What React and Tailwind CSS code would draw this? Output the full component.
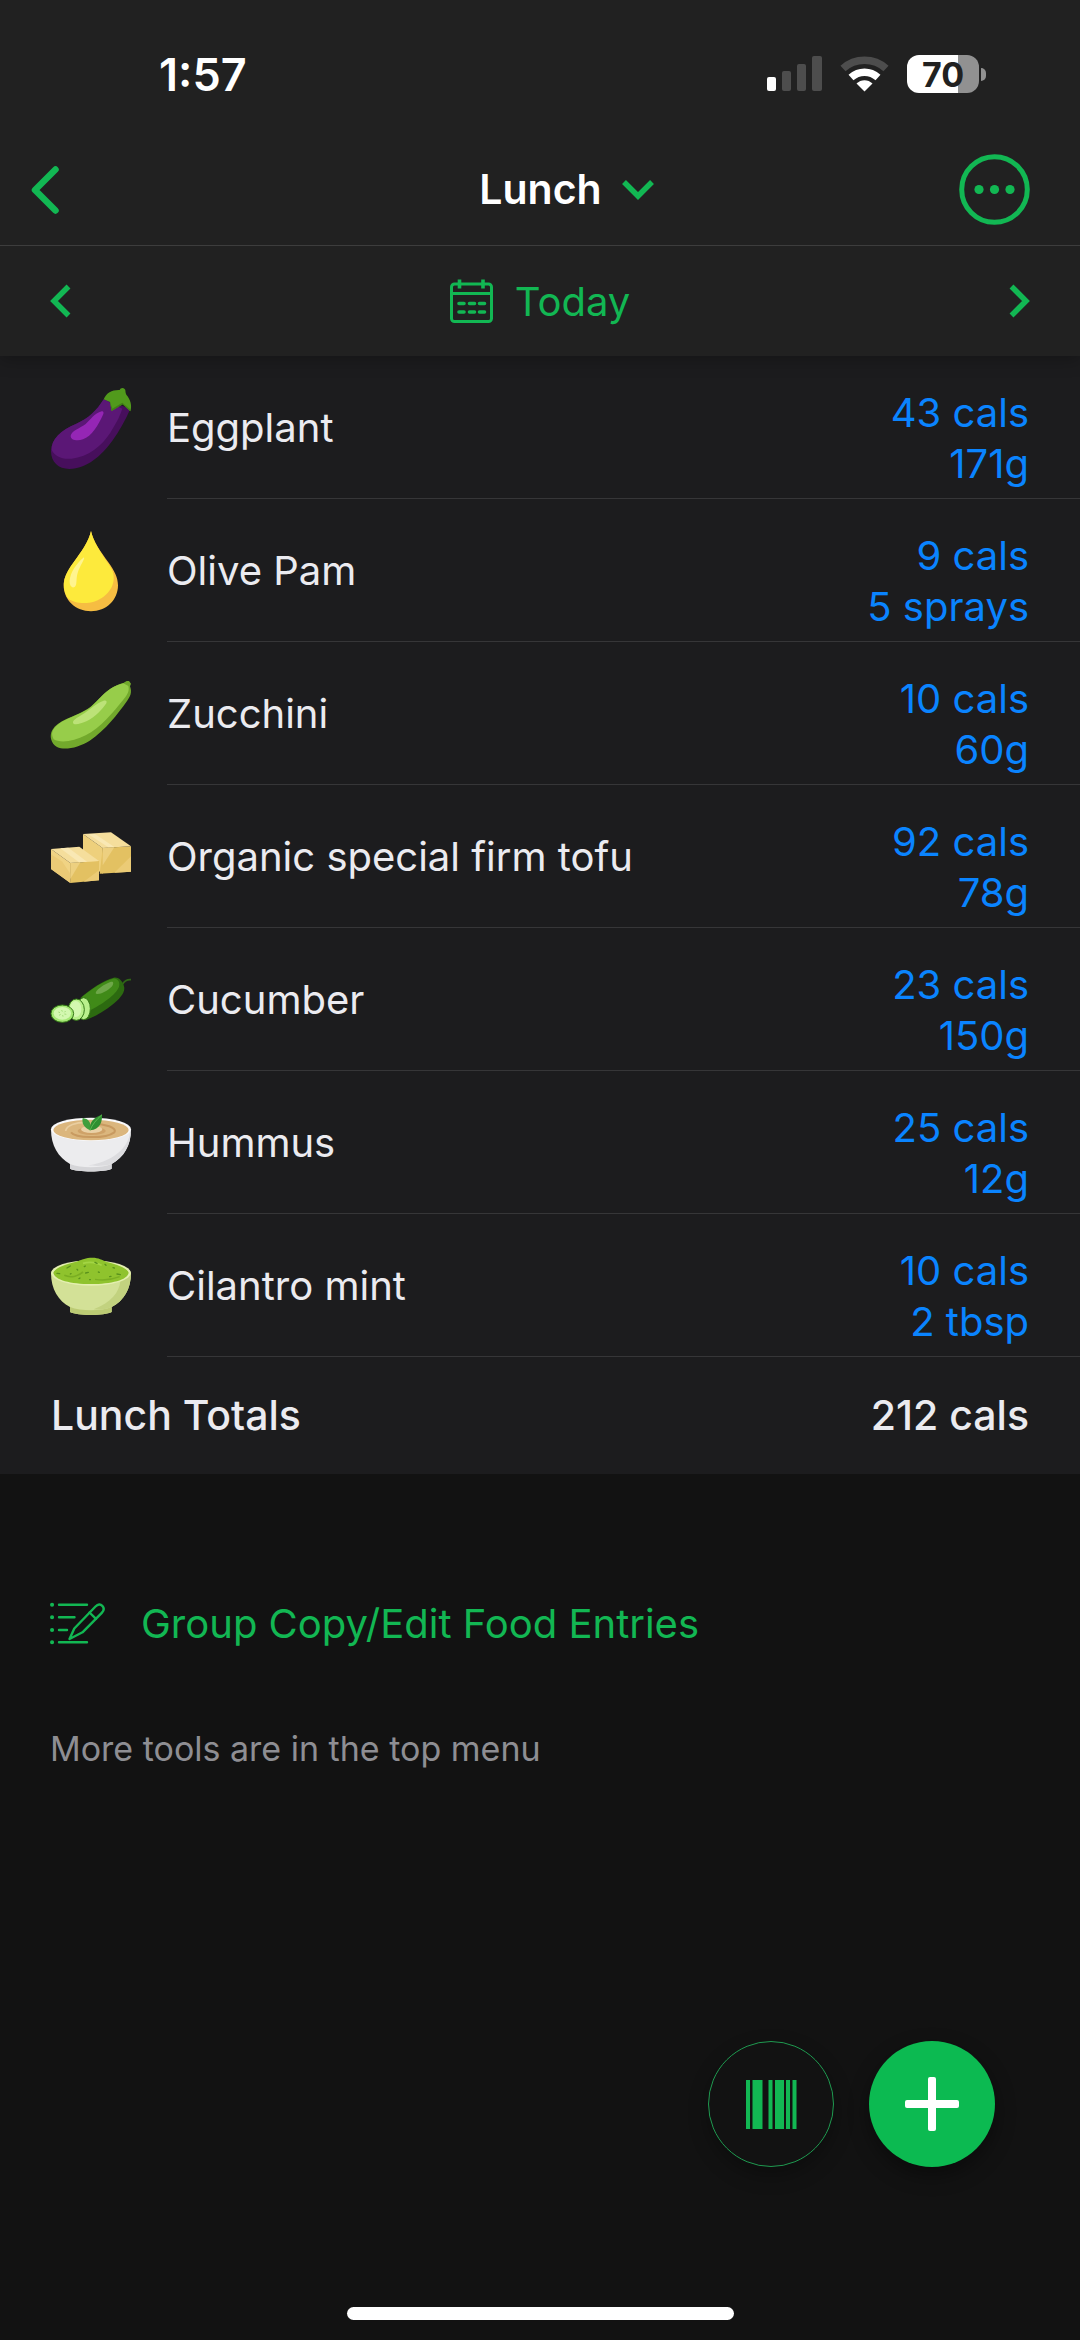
import React, { useState } from "react";

// Food drawings
const Eggplant = () => (
  <svg viewBox="0 0 240 240" className="w-20 h-20 overflow-visible" aria-hidden="true">
    <path
      d="M158 34C137 68 112 92 76 107C30 126 0 154 0 190C0 222 22 243 55 243C108 243 152 202 183 160C204 130 224 96 238 62Z"
      fill="#470f5c"
    />
    <path
      d="M158 34C137 68 112 92 76 107C30 126 0 154 2 186C12 206 34 215 62 212C112 206 152 174 178 134C192 110 204 92 214 62Z"
      fill="#5b1776"
    />
    <path
      d="M152 70C130 76 118 96 104 108C88 120 62 128 59 143C58 156 78 160 96 154C122 145 142 112 157 78C159 71 156 69 152 70Z"
      fill="#9526b5"
    />
    <path
      d="M158 34C166 14 184 5 206 6C208 0 216 -2 221 3C225 7 222 13 226 20C238 34 244 52 238 70L215 49L182 69L177 42Z"
      fill="#519a1c"
    />
    <path d="M177 42L182 69L215 49L238 70L237 64L214 44L184 62Z" fill="#3f7f14" />
  </svg>
);

const OilDrop = () => (
  <svg viewBox="0 0 240 240" className="w-20 h-20 overflow-visible" aria-hidden="true">
    <path
      d="M120 0C126 30 150 64 172 94C190 119 201 140 201 163C201 207 166 241 120 241C74 241 38 207 38 163C38 140 50 119 68 94C90 64 114 30 120 0Z"
      fill="#f6bd42"
    />
    <path
      d="M120 0C126 30 148 62 166 90C182 112 190 124 188 146C184 188 140 219 92 216C74 215 58 210 48 199C28 160 42 128 68 94C90 64 114 30 120 0Z"
      fill="#fdea3c"
    />
    <path
      d="M97 80C76 98 58 124 56 148C55 162 61 171 69 169C77 166 76 154 77 142C79 118 92 100 99 84C100 80 99 78 97 80Z"
      fill="#fff48f"
    />
  </svg>
);

const Zucchini = () => (
  <svg viewBox="0 0 240 240" className="w-20 h-20 overflow-visible" aria-hidden="true">
    <path
      d="M217 27L227 21L234 21L240 29L237 37C244 56 238 68 226 84C200 120 164 168 116 200C84 220 42 230 18 219C0 208 -6 186 4 168C22 138 64 132 108 106C142 86 160 42 217 27Z"
      fill="#72a92c"
    />
    <path
      d="M217 28L232 36C236 50 230 60 218 76C186 116 148 162 104 184C70 202 28 208 8 196C-2 178 4 166 22 151C50 130 78 126 110 106C142 86 160 42 217 28Z"
      fill="#97cd4a"
    />
    <path
      d="M156 81C136 88 120 104 100 118C84 129 66 136 66 146C68 155 88 150 108 141C134 128 154 106 166 88C169 80 164 78 156 81Z"
      fill="#bce278"
    />
  </svg>
);

const Tofu = () => (
  <svg viewBox="0 0 240 240" className="w-20 h-20 overflow-visible" aria-hidden="true">
    <path d="M96 51L155 93L155 170L96 130Z" fill="#eed07c" />
    <path d="M155 93L240 88L240 164L146 170Z" fill="#e3c162" />
    <path d="M96 51L180 46L240 88L155 93Z" fill="#f5de9c" />
    <path d="M112 52L132 51L190 90L172 91Z" fill="#f9e8b4" />
    <path d="M155 93L190 91L155 145Z" fill="#edd080" />
    <path d="M240 118L240 164L190 167Z" fill="#ebcb76" />
    <path d="M0 96L58 138L58 198L0 156Z" fill="#f0d384" />
    <path d="M58 138L144 132L144 190L58 198Z" fill="#e3c162" />
    <path d="M0 96L85 89L144 132L58 138Z" fill="#f5de9c" />
    <path d="M28 94L52 92L108 134L84 136Z" fill="#f9e8b4" />
    <path d="M0 112L34 134L58 170L58 198L0 156Z" fill="#ebca76" />
    <path d="M58 138L88 136L58 186Z" fill="#edd080" />
    <path d="M144 160L144 190L98 194Z" fill="#ebcb76" />
  </svg>
);

const Cucumber = () => (
  <svg viewBox="0 0 240 240" className="w-20 h-20 overflow-visible" aria-hidden="true">
    <path d="M215 72C222 60 230 58 240 59" fill="none" stroke="#2f6617" strokeWidth="5" />
    <path
      d="M88 114C118 88 158 60 188 53C204 50 218 66 220 84C220 102 204 118 184 134C158 154 128 172 104 180C112 156 112 124 88 114Z"
      fill="#2c6a10"
    />
    <path
      d="M92 112C122 86 160 62 186 56C200 54 208 66 204 80C196 104 150 134 116 152C114 134 106 120 92 112Z"
      fill="#408a18"
    />
    <path
      d="M178 66C160 72 134 90 134 99C138 108 168 94 182 80C190 70 187 63 178 66Z"
      fill="#6ea749"
    />
    <ellipse cx="98" cy="146" rx="20" ry="33" fill="#b9f08c" stroke="#357a17" strokeWidth="3" />
    <ellipse cx="76" cy="149" rx="24" ry="32" fill="#b9f08c" stroke="#357a17" strokeWidth="3" />
    <ellipse cx="74" cy="147" rx="17" ry="24" fill="#d3f8b0" />
    <ellipse cx="34" cy="161" rx="34" ry="26" fill="#a5e875" stroke="#357a17" strokeWidth="3" />
    <ellipse cx="34" cy="160" rx="26" ry="19" fill="#d3f8b0" />
    <path d="M22 156l5 2M32 150l2 5M44 153l-4 4M46 163l-6-1M36 170l-1-5M24 166l5-3" stroke="#8bcf60" strokeWidth="2" />
  </svg>
);

const Hummus = () => (
  <svg viewBox="0 0 240 240" className="w-20 h-20 overflow-visible" aria-hidden="true">
    <path
      d="M0 79C0 128 22 164 57 183L57 197C80 208 160 208 182 197L182 183C218 164 240 128 240 79Z"
      fill="#ececee"
    />
    <path d="M57 183C90 196 150 196 182 183L182 197C160 208 80 208 57 197Z" fill="#d5d5d8" />
    <path d="M240 79C240 128 218 164 182 183C160 190 130 190 112 187C176 178 226 142 236 96Z" fill="#dcdcdf" />
    <ellipse cx="120" cy="79" rx="120" ry="35" fill="#f9f9fa" />
    <ellipse cx="120" cy="81" rx="113" ry="31" fill="#dbb67d" />
    <path d="M60 88C72 104 160 110 190 88C200 74 160 62 128 62" fill="none" stroke="#c89a60" strokeWidth="6" />
    <path d="M44 84C46 66 76 58 104 58" fill="none" stroke="#e9cea0" strokeWidth="5" />
    <ellipse cx="122" cy="84" rx="42" ry="12" fill="#cfa268" />
    <ellipse cx="122" cy="79" rx="32" ry="11" fill="#ead1a6" />
    <path d="M118 82C98 74 92 60 95 45C112 47 122 58 118 82Z" fill="#3f9e3c" />
    <path d="M117 82C114 56 130 42 153 35C154 56 148 78 117 82Z" fill="#2f8f30" />
    <path d="M117 82C124 64 136 50 153 35" fill="none" stroke="#5bb850" strokeWidth="3" />
  </svg>
);

const MintBowl = () => (
  <svg viewBox="0 0 240 240" className="w-20 h-20 overflow-visible" aria-hidden="true">
    <path
      d="M0 80C0 130 22 164 57 183L57 198C80 210 160 210 182 198L182 183C218 164 240 130 240 80Z"
      fill="#d3e197"
    />
    <path d="M57 183C90 196 150 196 182 183L182 198C160 210 80 210 57 198Z" fill="#bccb74" />
    <path d="M240 80C240 130 218 164 182 183C164 190 144 192 128 190C182 168 204 140 208 106Z" fill="#c2d27f" />
    <ellipse cx="120" cy="81" rx="120" ry="38" fill="#e4efb0" />
    <path
      d="M7 80C14 62 50 54 76 47C94 40 104 35 124 35C144 35 152 42 168 48C192 55 228 64 233 80C230 102 180 114 120 114C60 114 10 102 7 80Z"
      fill="#8fc32d"
    />
    <path d="M40 88C62 98 84 88 96 78" fill="none" stroke="#7aae22" strokeWidth="5" />
    <path d="M132 100C156 104 186 100 206 92" fill="none" stroke="#7aae22" strokeWidth="4" />
    <path d="M96 52C116 46 140 50 152 58" fill="none" stroke="#a3d544" strokeWidth="5" />
    <g stroke="#5a921c" strokeWidth="4" strokeLinecap="round">
      <path d="M48 66l10-6M18 82l8 1M104 81l8-2M132 49l6 3M162 55l3 3M78 70l2 2M198 84l10 2M116 101l2 0M142 78l3 1M176 92l4-1M84 98l3-2M100 62l3-2M186 65l4 1M58 84l2-1" />
    </g>
  </svg>
);

const entries = [
  { name: "Eggplant", cals: 43, amount: "171g", Icon: Eggplant },
  { name: "Olive Pam", cals: 9, amount: "5 sprays", Icon: OilDrop },
  { name: "Zucchini", cals: 10, amount: "60g", Icon: Zucchini },
  { name: "Organic special firm tofu", cals: 92, amount: "78g", Icon: Tofu },
  { name: "Cucumber", cals: 23, amount: "150g", Icon: Cucumber },
  { name: "Hummus", cals: 25, amount: "12g", Icon: Hummus },
  { name: "Cilantro mint", cals: 10, amount: "2 tbsp", Icon: MintBowl },
];

const StatusBar = () => (
  <div className="flex items-center justify-between pt-[14px] h-[134px] pl-[159px] pr-[94px]">
    <span className="text-[45px] font-semibold text-white">1:57</span>
    <div className="flex items-center gap-[18px]">
      <svg className="w-[55px] h-[36px]" viewBox="0 0 55 36" aria-hidden="true">
        <rect x="0" y="21" width="9" height="14" rx="2" fill="#fff" />
        <rect x="15" y="15" width="9" height="20" rx="2" fill="#4d4d4d" />
        <rect x="30" y="8" width="9" height="27" rx="2" fill="#4d4d4d" />
        <rect x="45" y="0" width="10" height="35" rx="2" fill="#4d4d4d" />
      </svg>
      <svg className="w-[49px] h-[36px]" viewBox="0 0 49 36" aria-hidden="true">
        <path d="M3 12.5C15 1.5 34 1.5 46 12.5" fill="none" stroke="#4d4d4d" strokeWidth="7.5" />
        <path d="M11 21.5C19 14.5 30 14.5 38 21.5" fill="none" stroke="#fff" strokeWidth="7.5" />
        <path d="M16.5 27.5C21 23 28 23 32.5 27.5L24.5 35.5Z" fill="#fff" />
      </svg>
      <div className="flex items-center gap-[2px]">
        <div className="flex items-center justify-center w-[72px] h-[38px] rounded-xl bg-linear-to-r from-white from-71% to-[#919191] to-71% text-[34px] font-bold text-[#212121]">
          70
        </div>
        <div className="w-[5px] h-[13px] rounded-r-full bg-[#919191]" />
      </div>
    </div>
  </div>
);

const FoodRow = ({ entry }) => {
  const { name, cals, amount, Icon } = entry;
  return (
    <li className="flex items-center gap-9 pl-[51px]">
      <Icon />
      <div className="flex flex-1 justify-between h-[143px] pr-[51px] border-b border-[#363638]">
        <span className="self-center text-[#ebebf0]">{name}</span>
        <div className="pt-[31px] text-right text-[#0a84ff]">
          <div>{cals} cals</div>
          <div>{amount}</div>
        </div>
      </div>
    </li>
  );
};

const App = () => {
  const [meal] = useState("Lunch");
  const total = entries.reduce((sum, entry) => sum + entry.cals, 0);

  return (
    <div className="min-h-screen flex flex-col bg-[#121212] font-[Inter,'Liberation_Sans',sans-serif] text-[40px] leading-[51px]">
      {/* Header */}
      <header className="relative bg-[#212121] text-[#12b753] shadow-[0_4px_16px_rgba(0,0,0,0.25)]">
        <StatusBar />
        <div className="grid grid-cols-[1fr_auto_1fr] items-center h-[112px] pl-[31px] pr-[50px] border-b border-[#3d3d3d]">
          <button type="button" aria-label="Back" className="justify-self-start">
            <svg className="w-7 h-12" viewBox="0 0 28 48" fill="none" stroke="currentColor" aria-hidden="true">
              <path d="M24.5 3.5L4 24L24.5 44.5" strokeWidth="6.5" strokeLinecap="round" strokeLinejoin="round" />
            </svg>
          </button>
          <button type="button" className="relative pl-5 text-[41px] text-white font-semibold">
            {meal}
            <svg
              className="absolute left-full top-4 ml-5 w-8 h-5"
              viewBox="0 0 32 20"
              fill="none"
              stroke="#12b753"
              aria-hidden="true"
            >
              <path d="M2 2L16 16L30 2" strokeWidth="5.5" />
            </svg>
          </button>
          <button type="button" aria-label="More options" className="justify-self-end">
            <svg className="w-[71px] h-[71px]" viewBox="0 0 71 71" fill="currentColor" aria-hidden="true">
              <circle cx="35.5" cy="35.5" r="32.8" fill="none" stroke="currentColor" strokeWidth="5" />
              <circle cx="20" cy="35.5" r="4.6" />
              <circle cx="35.5" cy="35.5" r="4.6" />
              <circle cx="51" cy="35.5" r="4.6" />
            </svg>
          </button>
        </div>

        {/* Date picker */}
        <div className="flex items-center justify-between h-[110px] px-[50px]">
          <button type="button" aria-label="Previous day">
            <svg className="w-[21px] h-[34px]" viewBox="0 0 21 34" fill="none" stroke="currentColor" aria-hidden="true">
              <path d="M18.5 2.5L4 17L18.5 31.5" strokeWidth="5.5" />
            </svg>
          </button>
          <button type="button" className="flex items-center gap-[22px]">
            <svg className="w-[43px] h-[44px]" viewBox="0 0 43 44" fill="none" stroke="currentColor" strokeWidth="3" aria-hidden="true">
              <rect x="1.5" y="5" width="40" height="37.5" rx="3" />
              <path d="M1.5 14.5H41.5" />
              <path d="M9.5 0.5V9.5M33 0.5V9.5" strokeWidth="3.6" />
              <path d="M9 24.5H14M19.5 24.5H24.5M29.5 24.5H34.5M9 33H14M19.5 33H24.5M29.5 33H34.5" strokeWidth="3.6" strokeLinecap="round" />
            </svg>
            Today
          </button>
          <button type="button" aria-label="Next day">
            <svg className="w-[21px] h-[34px]" viewBox="0 0 21 34" fill="none" stroke="currentColor" aria-hidden="true">
              <path d="M2.5 2.5L17 17L2.5 31.5" strokeWidth="5.5" />
            </svg>
          </button>
        </div>
      </header>

      {/* Food entries */}
      <main className="flex flex-col flex-1">
        <section className="bg-[#1c1c1e]">
          <ul>
            {entries.map((entry) => (
              <FoodRow key={entry.name} entry={entry} />
            ))}
          </ul>
          <div className="flex items-center justify-between h-[117px] px-[51px] text-[41px] font-medium text-[#ebebf0]">
            <span>{meal} Totals</span>
            <span>{total} cals</span>
          </div>
        </section>

        {/* Tools */}
        <section className="pt-[124px] px-[50px]">
          <button type="button" className="flex items-center gap-9 text-[#12b753]">
            <svg className="w-[55px] h-[44px]" viewBox="0 0 55 44" fill="none" stroke="currentColor" strokeWidth="2.4" strokeLinecap="round" strokeLinejoin="round" aria-hidden="true">
              <path d="M9 2.7H37M9 15.3H24.5M9 28H17M9 40.3H37" />
              <path d="M2 2.7h.1M2 15.3h.1M2 28h.1M2 40.3h.1" strokeWidth="4" />
              <path d="M45.5 4.5C48 2 50.5 2 52.3 3.8C54.2 5.8 54 8.5 51.8 10.8L32.5 30.3L19.5 37L24.3 26.5Z" />
              <path d="M39.5 10.5L46 16.8" />
            </svg>
            Group Copy/Edit Food Entries
          </button>
          <p className="mt-[74px] text-[34px] text-[#8e8e93]">More tools are in the top menu</p>
        </section>

        {/* Floating actions */}
        <div className="flex justify-end gap-[35px] mt-auto pt-10 pr-[85px] pb-[140px]">
          <button
            type="button"
            aria-label="Scan barcode"
            className="flex items-center justify-center w-[126px] h-[126px] rounded-full border border-[#1f9a50] bg-[#121212] text-[#12b753] shadow-[0_8px_20px_rgba(0,0,0,0.3)]"
          >
            <svg className="w-[51px] h-[49px]" viewBox="0 0 51 49" fill="currentColor" aria-hidden="true">
              <rect x="0" width="4" height="49" />
              <rect x="6.5" width="10" height="49" />
              <rect x="22.5" width="4" height="49" />
              <rect x="29" width="9" height="49" />
              <rect x="40" width="4" height="49" />
              <rect x="46.5" width="4" height="49" />
            </svg>
          </button>
          <button
            type="button"
            aria-label="Add food"
            className="flex items-center justify-center w-[126px] h-[126px] rounded-full bg-[#0cba51] text-white shadow-[0_8px_20px_rgba(0,0,0,0.4)]"
          >
            <svg className="w-[54px] h-[54px]" viewBox="0 0 54 54" fill="currentColor" aria-hidden="true">
              <rect x="23" y="0" width="8" height="54" rx="2" />
              <rect x="0" y="23" width="54" height="8" rx="2" />
            </svg>
          </button>
        </div>
        <div className="self-center w-[387px] h-[13px] mb-5 rounded-full bg-white" />
      </main>
    </div>
  );
};

export default App;
